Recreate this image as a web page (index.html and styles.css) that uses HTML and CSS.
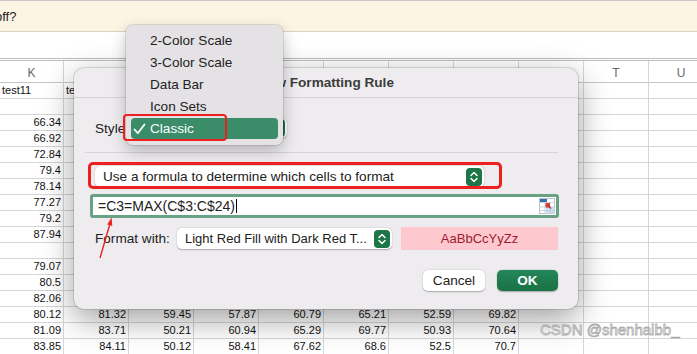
FILE: index.html
```html
<!DOCTYPE html>
<html>
<head>
    <title>New Formatting Rule</title>
    <link rel="stylesheet" href="styles.css">
</head>
<body>
    <div class="banner"><span class="banner-text">off?</span></div>
    <div class="toolbar"></div>

    <div class="sheet">
        <div class="c h">K</div><div class="c h">L</div><div class="c h">M</div><div class="c h">N</div><div class="c h">O</div><div class="c h">P</div><div class="c h">Q</div><div class="c h">R</div><div class="c h">S</div><div class="c h">T</div><div class="c h">U</div>
        <div class="c">test11</div><div class="c">test12</div><div class="c"></div><div class="c"></div><div class="c"></div><div class="c"></div><div class="c"></div><div class="c"></div><div class="c"></div><div class="c"></div><div class="c"></div>
        <div class="c"></div><div class="c"></div><div class="c"></div><div class="c"></div><div class="c"></div><div class="c"></div><div class="c"></div><div class="c"></div><div class="c"></div><div class="c"></div><div class="c"></div>
        <div class="c n">66.34</div><div class="c"></div><div class="c"></div><div class="c"></div><div class="c"></div><div class="c"></div><div class="c"></div><div class="c"></div><div class="c"></div><div class="c"></div><div class="c"></div>
        <div class="c n">66.92</div><div class="c"></div><div class="c"></div><div class="c"></div><div class="c"></div><div class="c"></div><div class="c"></div><div class="c"></div><div class="c"></div><div class="c"></div><div class="c"></div>
        <div class="c n">72.84</div><div class="c"></div><div class="c"></div><div class="c"></div><div class="c"></div><div class="c"></div><div class="c"></div><div class="c"></div><div class="c"></div><div class="c"></div><div class="c"></div>
        <div class="c n">79.4</div><div class="c"></div><div class="c"></div><div class="c"></div><div class="c"></div><div class="c"></div><div class="c"></div><div class="c"></div><div class="c"></div><div class="c"></div><div class="c"></div>
        <div class="c n">78.14</div><div class="c"></div><div class="c"></div><div class="c"></div><div class="c"></div><div class="c"></div><div class="c"></div><div class="c"></div><div class="c"></div><div class="c"></div><div class="c"></div>
        <div class="c n">77.27</div><div class="c"></div><div class="c"></div><div class="c"></div><div class="c"></div><div class="c"></div><div class="c"></div><div class="c"></div><div class="c"></div><div class="c"></div><div class="c"></div>
        <div class="c n">79.2</div><div class="c"></div><div class="c"></div><div class="c"></div><div class="c"></div><div class="c"></div><div class="c"></div><div class="c"></div><div class="c"></div><div class="c"></div><div class="c"></div>
        <div class="c n">87.94</div><div class="c"></div><div class="c"></div><div class="c"></div><div class="c"></div><div class="c"></div><div class="c"></div><div class="c"></div><div class="c"></div><div class="c"></div><div class="c"></div>
        <div class="c"></div><div class="c"></div><div class="c"></div><div class="c"></div><div class="c"></div><div class="c"></div><div class="c"></div><div class="c"></div><div class="c"></div><div class="c"></div><div class="c"></div>
        <div class="c n">79.07</div><div class="c"></div><div class="c"></div><div class="c"></div><div class="c"></div><div class="c"></div><div class="c"></div><div class="c"></div><div class="c"></div><div class="c"></div><div class="c"></div>
        <div class="c n">80.5</div><div class="c"></div><div class="c"></div><div class="c"></div><div class="c"></div><div class="c"></div><div class="c"></div><div class="c"></div><div class="c"></div><div class="c"></div><div class="c"></div>
        <div class="c n">82.06</div><div class="c"></div><div class="c"></div><div class="c"></div><div class="c"></div><div class="c"></div><div class="c"></div><div class="c"></div><div class="c"></div><div class="c"></div><div class="c"></div>
        <div class="c n">80.12</div><div class="c n">81.32</div><div class="c n">59.45</div><div class="c n">57.87</div><div class="c n">60.79</div><div class="c n">65.21</div><div class="c n">52.59</div><div class="c n">69.82</div><div class="c"></div><div class="c"></div><div class="c"></div>
        <div class="c n">81.09</div><div class="c n">83.71</div><div class="c n">50.21</div><div class="c n">60.94</div><div class="c n">65.29</div><div class="c n">69.77</div><div class="c n">50.93</div><div class="c n">70.64</div><div class="c"></div><div class="c"></div><div class="c"></div>
        <div class="c n">83.85</div><div class="c n">84.11</div><div class="c n">50.12</div><div class="c n">58.41</div><div class="c n">67.62</div><div class="c n">68.6</div><div class="c n">52.5</div><div class="c n">70.7</div><div class="c"></div><div class="c"></div><div class="c"></div>
    </div>

    <div class="dialog">
        <div class="dialog-title">New Formatting Rule</div>
        <div class="dialog-body">
            <div class="field-row style-row">
                <span class="label style-label">Style:</span>
                <div class="popup style-popup">
                    <span>Classic</span>
                    <svg class="stepper" viewBox="0 0 16 18"><rect width="16" height="18" rx="4" fill="#1d7647"/><path d="M5 7.5L8 4.5L11 7.5M5 10.5L8 13.5L11 10.5" stroke="#fff" stroke-width="1.5" fill="none" stroke-linecap="round" stroke-linejoin="round"/></svg>
                </div>
            </div>
            <div class="divider"></div>
            <div class="popup rule-popup">
                <span>Use a formula to determine which cells to format</span>
                <svg class="stepper" viewBox="0 0 16 18"><rect width="16" height="18" rx="4" fill="#1d7647"/><path d="M5 7.5L8 4.5L11 7.5M5 10.5L8 13.5L11 10.5" stroke="#fff" stroke-width="1.5" fill="none" stroke-linecap="round" stroke-linejoin="round"/></svg>
            </div>
            <div class="formula">
                <span class="formula-text">=C3=MAX(C$3:C$24)</span><span class="caret"></span>
                <svg class="ref-icon" viewBox="0 0 16 16">
                    <rect x="0.5" y="0.5" width="15" height="15" fill="#fff" stroke="#b9c3cf"/>
                    <rect x="7" y="9" width="8.5" height="6.5" fill="#cddff2"/>
                    <path d="M1 4.5H15M1 9H15M1 12.5H15M6 4V15.5M11 4V15.5" stroke="#c3cbd5" stroke-width="0.8"/>
                    <rect x="1" y="1" width="7" height="3" fill="#3b6db5"/>
                    <rect x="6.5" y="5" width="4.5" height="4.5" fill="#d8423a"/>
                    <path d="M9 7.5L12 10.5" stroke="#b0302a" stroke-width="1.2"/>
                </svg>
            </div>
            <div class="field-row format-row">
                <span class="label format-label">Format with:</span>
                <div class="popup format-popup">
                    <span>Light Red Fill with Dark Red T...</span>
                    <svg class="stepper" viewBox="0 0 16 18"><rect width="16" height="18" rx="4" fill="#1d7647"/><path d="M5 7.5L8 4.5L11 7.5M5 10.5L8 13.5L11 10.5" stroke="#fff" stroke-width="1.5" fill="none" stroke-linecap="round" stroke-linejoin="round"/></svg>
                </div>
                <div class="preview">AaBbCcYyZz</div>
            </div>
            <div class="buttons">
                <button class="btn">Cancel</button>
                <button class="btn btn-ok">OK</button>
            </div>
        </div>
    </div>

    <div class="menu">
        <div class="menu-item">2-Color Scale</div>
        <div class="menu-item">3-Color Scale</div>
        <div class="menu-item">Data Bar</div>
        <div class="menu-item">Icon Sets</div>
        <div class="menu-item selected">
            <svg class="check" viewBox="0 0 13 12"><path d="M1.5 6.5L4.8 10.2L11.5 1.5" stroke="#fff" stroke-width="1.8" fill="none" stroke-linecap="round" stroke-linejoin="round"/></svg>
            Classic
        </div>
    </div>

    <div class="mark mark-classic"></div>
    <div class="mark mark-rule"></div>
    <svg class="arrow" viewBox="0 0 24 48">
        <path d="M6 44L16.2 9" stroke="#e8231f" stroke-width="1.4" fill="none"/>
        <path d="M17.6 3.5L13.2 10.6L18.3 11.9Z" fill="#e8231f"/>
    </svg>

    <div class="watermark">CSDN @shenhaibb_</div>
</body>
</html>
```

FILE: styles.css
```css
* {
    box-sizing: border-box;
}
body {
    margin: 0;
    width: 697px;
    height: 354px;
    overflow: hidden;
    position: relative;
    font-family: "Liberation Sans", Arial, sans-serif;
    background-color: #ffffff;
}
.banner {
    height: 32px;
    display: flex;
    align-items: center;
    background-color: #fdf5e3;
    border-top: 1px solid #c9c9c9;
    border-bottom: 1px solid #ddd4c0;
    font-size: 13px;
    color: #222;
    overflow: hidden;
}
.banner-text {
    margin-left: -5px;
}
.toolbar {
    height: 26px;
}
.sheet {
    display: grid;
    width: 714px;
    grid-template-columns: 64px repeat(10, 65px);
    grid-template-rows: 22px;
    grid-auto-rows: 16px;
    border-top: 3px double #bdbdbd;
    font-size: 11px;
    color: #111;
}
.c {
    border-right: 1px solid #d6d6d6;
    border-bottom: 1px solid #d6d6d6;
    padding: 0 2px;
    line-height: 15px;
    white-space: nowrap;
    overflow: hidden;
}
.n {
    text-align: right;
}
.h {
    text-align: center;
    font-size: 12px;
    line-height: 21px;
    padding-top: 2px;
    color: #666;
    border-bottom-color: #c6c6c6;
}

/* dialog */
.dialog {
    position: absolute;
    left: 74px;
    top: 68px;
    width: 504px;
    height: 241px;
    background-color: #eeecef;
    border-radius: 10px;
    box-shadow: 0 0 0 1px rgba(0, 0, 0, 0.12), 0 10px 32px rgba(0, 0, 0, 0.38);
    font-size: 13.6px;
    color: #222;
}
.dialog-title {
    height: 30px;
    line-height: 29px;
    text-align: center;
    font-weight: bold;
    color: #3c3c3c;
    border-bottom: 1px solid #d4d2d5;
}
.dialog-body {
    display: flex;
    flex-direction: column;
    padding: 0 19px 0 16px;
}
.field-row {
    display: flex;
    align-items: center;
    padding-left: 5px;
}
.style-row {
    margin-top: 20px;
    height: 20px;
}
.style-label {
    width: 36px;
}
.format-label {
    width: 82px;
}
.popup {
    display: flex;
    align-items: center;
    justify-content: space-between;
    background-color: #ffffff;
    border-radius: 5px;
    box-shadow: 0 0.5px 1.5px rgba(0, 0, 0, 0.3);
    padding: 0 2px 0 8px;
    white-space: nowrap;
}
.style-popup {
    width: 156px;
    height: 20px;
}
.stepper {
    width: 16px;
    height: 18px;
    flex-shrink: 0;
}
.divider {
    margin: 14px 1px 0 -5px;
    height: 1px;
    background-color: #d6d4d7;
}
.rule-popup {
    margin: 13px 0 0 5px;
    width: 389px;
    height: 21px;
}
.formula {
    display: flex;
    align-items: center;
    margin-top: 7px;
    height: 24px;
    border: 3px solid #68a282;
    border-radius: 3px;
    background-color: #ffffff;
    padding: 0 1px 0 5px;
    font-size: 14px;
}
.caret {
    width: 1px;
    height: 14px;
    margin-left: 1px;
    background-color: #000;
}
.ref-icon {
    width: 16px;
    height: 16px;
    margin-left: auto;
}
.format-row {
    margin-top: 9px;
    height: 23px;
}
.format-popup {
    width: 215px;
    height: 21px;
    font-size: 13px;
}
.preview {
    margin-left: 9px;
    width: 157px;
    height: 23px;
    line-height: 23px;
    text-align: center;
    background-color: #fdc9cf;
    color: #9e1b2e;
    font-size: 13px;
}
.buttons {
    display: flex;
    justify-content: flex-end;
    gap: 12px;
    margin-top: 20px;
    padding-right: 1px;
}
.btn {
    height: 21px;
    width: 62px;
    border: none;
    border-radius: 5px;
    background-color: #ffffff;
    box-shadow: 0 0.5px 1.5px rgba(0, 0, 0, 0.3);
    font-family: "Liberation Sans", Arial, sans-serif;
    font-size: 13.6px;
    color: #222;
    padding: 0;
}
.btn-ok {
    width: 61px;
    background: linear-gradient(#23875a, #1a7145);
    color: #ffffff;
    font-weight: bold;
}

/* open popup menu */
.menu {
    position: absolute;
    left: 126px;
    top: 25px;
    width: 157px;
    height: 120px;
    padding-top: 5px;
    background-color: #e4e2e5;
    border-radius: 7px;
    box-shadow: 0 0 0 1px rgba(0, 0, 0, 0.1), 0 6px 16px rgba(0, 0, 0, 0.25);
    font-size: 13.6px;
    color: #222;
}
.menu-item {
    position: relative;
    height: 22px;
    line-height: 22px;
    margin: 0 5px;
    padding-left: 19px;
    border-radius: 4px;
}
.menu-item.selected {
    height: 21px;
    line-height: 21px;
    background-color: #3a8d68;
    color: #ffffff;
}
.check {
    position: absolute;
    left: 2px;
    top: 5px;
    width: 13px;
    height: 12px;
}

/* annotations drawn over the screenshot */
.mark {
    position: absolute;
    border: 2px solid #ee1f1f;
    border-radius: 4px;
}
.mark-classic {
    left: 123px;
    top: 114px;
    width: 104px;
    height: 27px;
}
.mark-rule {
    left: 88px;
    top: 162px;
    width: 414px;
    height: 27px;
    border-width: 3px;
    border-radius: 5px;
}
.arrow {
    position: absolute;
    left: 94px;
    top: 214px;
    width: 24px;
    height: 48px;
}
.watermark {
    position: absolute;
    left: 540px;
    top: 321px;
    font-size: 15px;
    color: rgba(255, 255, 255, 0.85);
    -webkit-text-stroke: 0.8px rgba(130, 130, 130, 0.7);
    white-space: nowrap;
}
```
